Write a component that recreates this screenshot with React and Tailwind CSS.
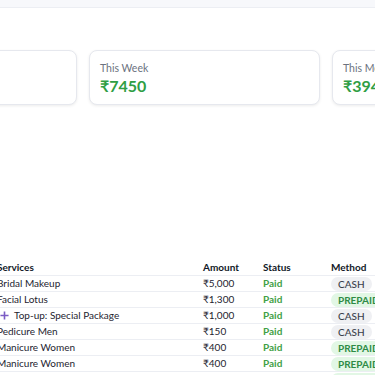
import React from 'react';

const cards = [
  { label: 'Today', value: '₹1300' },
  { label: 'This Week', value: '₹7450' },
  { label: 'This Month', value: '₹39450' },
];

const rows = [
  { service: 'Bridal Makeup', amount: '₹5,000', method: 'CASH' },
  { service: 'Facial Lotus', amount: '₹1,300', method: 'PREPAID' },
  { service: 'Top-up: Special Package', amount: '₹1,000', method: 'CASH', topup: true },
  { service: 'Pedicure Men', amount: '₹150', method: 'CASH' },
  { service: 'Manicure Women', amount: '₹400', method: 'PREPAID' },
  { service: 'Manicure Women', amount: '₹400', method: 'PREPAID' },
  { service: 'Hair Spa', amount: '₹800', method: 'PREPAID' },
];

function MethodBadge({ method }) {
  const prepaid = method === 'PREPAID';
  return (
    <span
      className={
        'flex items-center rounded-full px-[7px] h-[14px] text-[10px] leading-none ' +
        (prepaid ? 'bg-[#e2f7e5] text-[#2e8b45] font-bold' : 'bg-[#eff0f3] text-[#3a3f4b] font-medium')
      }
    >
      {method}
    </span>
  );
}

export default function App() {
  return (
    <div className="w-[375px] h-[375px] overflow-hidden bg-white font-['Lato','Noto_Sans',sans-serif] text-[#1e2430]">
      <div className="h-[8px] bg-[#f7f8fb] border-b border-[#eceef3]" />

      {/* summary cards */}
      <div className="flex gap-3 -ml-[154px] mt-[42px]">
        {cards.map((c) => (
          <div
            key={c.label}
            className="shrink-0 w-[231px] h-[55px] rounded-lg border border-[#e6e8ee] shadow-[0_1px_3px_rgba(0,0,0,0.08)] bg-white px-[10px] pt-[11px]"
          >
            <div className="text-[10.5px] leading-[13px] text-[#6b7280]">{c.label}</div>
            <div className="text-[16px] leading-[22px] font-bold text-[#2f9e44]">{c.value}</div>
          </div>
        ))}
      </div>

      {/* transactions */}
      <div className="mt-[155px] -ml-[3px] w-[420px] text-[10px] leading-[15px]">
        <div className="grid grid-cols-[206px_60px_68px_1fr] h-[16px] items-center border-b border-[#eceef3] font-bold text-[#111827]">
          <div>Services</div>
          <div>Amount</div>
          <div>Status</div>
          <div>Method</div>
        </div>
        {rows.map((r, i) => (
          <div
            key={i}
            className="grid grid-cols-[206px_60px_68px_1fr] h-[16px] items-center border-b border-[#eceef3]"
          >
            <div className="whitespace-nowrap">
              {r.topup ? (
                <span className="flex items-center gap-[5px] pl-[3px]">
                  <svg width="9" height="9" viewBox="0 0 10 10" className="shrink-0">
                    <path d="M5 0.5v9M0.5 5h9" stroke="#7b5cc4" strokeWidth="1.8" />
                  </svg>
                  {r.service}
                </span>
              ) : (
                r.service
              )}
            </div>
            <div>{r.amount}</div>
            <div className="font-bold text-[#3f9f46]">Paid</div>
            <div className="flex">
              <MethodBadge method={r.method} />
            </div>
          </div>
        ))}
      </div>
    </div>
  );
}
